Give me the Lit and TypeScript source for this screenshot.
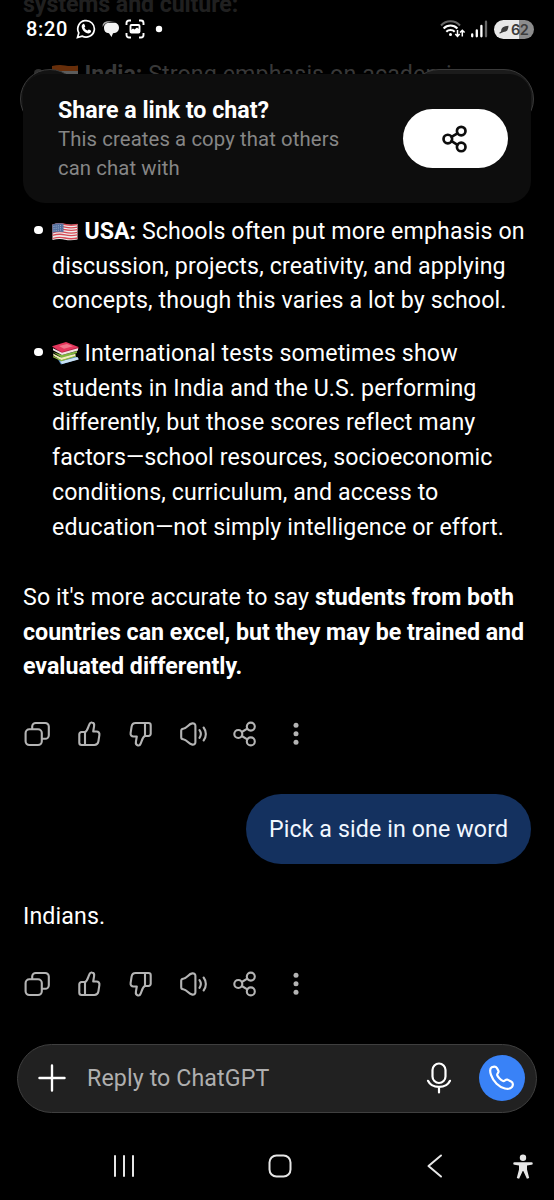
import { LitElement, html, css, svg } from "lit";
import { customElement } from "lit/decorators.js";

const stroke = (size: number, body: unknown, w = 2) => html`<svg width=${size} height=${size} viewBox="0 0 28 28" fill="none" stroke="currentColor" stroke-width=${w} stroke-linecap="round" stroke-linejoin="round">${body}</svg>`;

const share = svg`<circle cx="7.3" cy="14" r="4"/><circle cx="19.8" cy="6.600" r="4"/><circle cx="19.8" cy="21.400" r="4"/><path d="M10.8 12l5.500-3.300M10.8 16l5.500 3.400"/>`;
const thumb = svg`<path d="M10 12H6.500a2.200 2.200 0 0 0-2.200 2.200v8.600A2.200 2.200 0 0 0 6.500 25H19.400c2.100 0 3.600-1.300 4-3.600l1-6.500c.3-1.900-.9-3.400-2.900-3.400H18.200L19.100 6.100c.3-1.600-.3-3.100-2-3.500-1-.3-2.100.1-2.800 1.900C12.900 7.500 12.500 11.200 10 12ZM10 12V25"/>`;

const actions = [
  svg`<rect x="2.600" y="9.300" width="16.200" height="15.700" rx="3.800"/><path d="M9.200 9V6.600A3.600 3.600 0 0 1 12.800 3h9.400A3.600 3.600 0 0 1 25.800 6.600v8.600A3.600 3.600 0 0 1 22.200 18.800H19"/>`,
  thumb,
  svg`<g transform="rotate(180 14 14)">${thumb}</g>`,
  svg`<path d="M2.200 10.800C2.200 9.500 2.900 8.900 4.200 8.700 8.500 8 9.300 3.900 13.300 3.400 15.100 3.200 16.400 4.100 16.400 5.700V22.300C16.400 23.900 15.100 24.900 13.300 24.600 9.300 24 8.500 20 4.200 19.300 2.900 19.100 2.200 18.500 2.200 17.200Z"/><path d="M20.500 10.200a6.500 6.500 0 0 1 0 7.600M24.600 7.500a10.500 10.500 0 0 1 0 13"/>`,
  share,
  svg`<g fill="currentColor" stroke="none"><circle cx="14" cy="5.300" r="2.500"/><circle cx="14" cy="13.800" r="2.500"/><circle cx="14" cy="22.300" r="2.500"/></g>`,
];

@customElement("message-actions")
class MessageActions extends LitElement {
  static styles = css`:host{display:flex;gap:23.900px;color:#b4b4b4;height:28px}svg{display:block;flex:none}`;
  render() { return actions.map(a => stroke(28, a, 2.1)); }
}

@customElement("app-root")
class AppRoot extends LitElement {
  static styles = css`
    :host{display:block;position:relative;width:554px;height:1200px;overflow:hidden;background:#000;color:#fff;font-family:Roboto,sans-serif;font-size:23.200px;line-height:34.850px;letter-spacing:.11px}
    *{box-sizing:border-box}
    svg{display:block;flex:none}
    .page{display:flex;flex-direction:column;height:1200px;padding-top:213.700px}
    .body{padding:0 23px;white-space:nowrap}
    ul{list-style:none;margin:0;padding:0;display:flex;flex-direction:column;gap:17.500px}
    li{display:flex;gap:9px;padding-left:11px}
    .dot{width:8.500px;height:8.500px;border-radius:50%;background:#fff;margin:12px .5px 0 0;flex:none}
    .emoji{display:inline-block;vertical-align:-2px;margin-right:6.500px}
    .books{vertical-align:-4px;margin-right:5.500px}
    b{font-weight:700;letter-spacing:-.02px}
    p{margin:35px 0 0}
    .a1{margin-top:36px}
    .bubble{width:285px;height:70px;border-radius:35px;background:#14315f;margin:45.800px 0 0 auto;display:grid;place-items:center;color:#f1f7ff}
    .a2{margin-top:36px}
    .composer{display:flex;align-items:center;margin:46px 17px 0;height:69px;border:1px solid #3f3f3f;border-radius:35px;background:#212121;padding:0 11px 0 19px}
    .ph{flex:1;margin-left:20px;color:#afafaf}
    .call{width:46px;height:46px;border-radius:50%;background:#3982f7;display:grid;place-items:center;margin-left:27.500px}
    .nav{display:grid;grid-template-columns:124px 155.500px 155.500px 88px;flex:1;align-items:center;padding-top:20px;color:#e6e6e6}
    .nav svg{justify-self:end;margin-right:-14px}
    .under{position:absolute;inset:0 0 auto;height:76px;overflow:hidden;white-space:nowrap}
    .old1{position:absolute;left:23px;top:-13px;color:#202020;font-weight:700;letter-spacing:-.1px}
    .old2{position:absolute;left:34px;top:57px;display:flex;color:#383838}
    .old2 .dot{background:#303030;margin-right:9.500px}
    .old2 .emoji{opacity:.45;margin-top:8px;height:18px}
    .ghost{position:absolute;top:69px;height:60px;border:1px solid #3a3a3a;border-radius:30px}
    .gl{left:20px;width:60px;background:#131313}
    .gr{left:409px;width:125px;background:#1b1b1b}
    .card{position:absolute;left:23px;top:74px;width:508px;height:129px;border-radius:22px;background:#0d0d0d;display:flex;justify-content:space-between;align-items:center;padding:0 23.500px 0 35px}
    .title{font-weight:700;line-height:30px;letter-spacing:0}
    .desc{font-size:20.300px;line-height:29px;color:#868686}
    .btn{width:105px;height:59px;border-radius:30px;background:#fff;color:#0d0d0d;display:grid;place-items:center}
    .status{position:absolute;left:26px;right:20px;top:15px;height:28px;display:flex;align-items:center;font-size:20px;font-weight:500;letter-spacing:.7px}
    .time{width:50px}
    .msg{margin-left:6px}.scan{margin-left:5px}.more{margin-left:10px}.signal{margin-left:4px}
    .sp{flex:1}
    .bat{width:40px;height:19px;border-radius:10px;background:linear-gradient(90deg,#e8e8e8 62%,#8c8c8c 62%);color:#3c3c3c;display:flex;align-items:center;justify-content:center;font:600 14.500px/19px Inter,sans-serif;letter-spacing:-.4px;gap:1.500px;margin-left:6px}
  `;
  flag() { return html`<svg class="emoji" width="26" height="18" viewBox="0 0 26 18"><path fill="#eee" d="M.5 1.500Q7-.5 13 1t12.500 0V16.500Q19 18 13 16.700T.5 17Z"/><path stroke="#d64a55" stroke-width="1.300" fill="none" d="M.5 2Q7 0 13 1.500t12.500 0M.5 4.600Q7 2.600 13 4.100t12.500 0M.5 7.200Q7 5.200 13 6.700t12.500 0M.5 9.800Q7 7.800 13 9.300t12.500 0M.5 12.400Q7 10.400 13 11.900t12.500 0M.5 15.500Q7 13.500 13 15t12.500 0"/><path fill="#54709f" d="M.5 1.500Q6-.3 11.500.7V9Q6 8 .5 9.700Z"/><path stroke="#a8b9d3" stroke-width=".9" stroke-dasharray="1 1.200" d="M1.500 3.500l9-1.300M1.500 5.700l9-1.300M1.500 8l9-1.300"/></svg>`; }
  books() { return html`<svg class="emoji books" width="27" height="23" viewBox="0 0 27 23"><path fill="#4f83bd" d="M5 16l16-3.500 6 4.500-18 5.500z"/><path fill="#c9e1f4" d="M8 19.500l17.500-4.500 1.200 2.400L10 22z"/><path fill="#80b53b" d="M1 10l9 6 15-5v-2L10 13z"/><path fill="#f3eeb7" d="M1 11.500l8.500 4.300 14-4v2.400l-14 4-8-4.500z"/><path fill="#8fb93c" d="M1 14l8.500 4 14.500-4.600v1.200L9.500 19.300l-8.500-4z"/><path fill="#b91e46" d="M0 4.500l10 7L26.500 7V5z"/><path fill="#f3e3e4" d="M1 6.300l9 4.500L26 6.300v2.300l-16 4.500-9-4.800z"/><path fill="#e5375d" d="M0 4.300L14 0l12.500 5L10 10z"/><path fill="#f0768b" d="M7 4l8-2 6 2.200-9 2.600z"/></svg>`; }
  render() {
    return html`
    <div class="page">
      <div class="body">
        <ul>
          <li><i class="dot"></i><div>${this.flag()}<b>USA:</b> Schools often put more emphasis on<br>discussion, projects, creativity, and applying<br>concepts, though this varies a lot by school.</div></li>
          <li><i class="dot"></i><div>${this.books()}International tests sometimes show<br>students in India and the U.S. performing<br>differently, but those scores reflect many<br>factors—school resources, socioeconomic<br>conditions, curriculum, and access to<br>education—not simply intelligence or effort.</div></li>
        </ul>
        <p>So it's more accurate to say <b>students from both<br>countries can excel, but they may be trained and<br>evaluated differently.</b></p>
        <message-actions class="a1"></message-actions>
        <div class="bubble">Pick a side in one word</div>
        <p>Indians.</p>
        <message-actions class="a2"></message-actions>
      </div>
      <div class="composer">
        ${stroke(30, svg`<path d="M14 2.300v23.400M2.300 14h23.400"/>`, 2.2)}
        <span class="ph">Reply to ChatGPT</span>
        <svg width="26" height="34" viewBox="0 0 26 34" fill="none" stroke="#fff" stroke-width="2.200" stroke-linecap="round"><rect x="6.500" y="2.500" width="13" height="19.500" rx="6.500"/><path d="M2 19.800a11.800 9.600 0 0 0 22 0M13 26.500v5"/></svg>
        <span class="call">${stroke(28, svg`<path d="M3.800 3.200c1.800-.8 4.200-.7 5.100.8l1.600 3.100c.6 1.500-1.800 2.500-1.300 4 .6 2 3.800 5.200 5.900 5.900 1.500.5 2.400-1.900 4-1.400l4 1.800c2 .9 2.200 3.800 1 5.400-3 4-11 1.500-15.500-3S-.2 5.800 3.800 3.200z"/>`, 2.2)}</span>
      </div>
      <div class="nav">
        ${stroke(28, svg`<path d="M5 4v20M14 4v20M23 4v20"/>`, 2)}
        ${stroke(28, svg`<rect x="3.500" y="3.500" width="21" height="21" rx="7"/>`, 2)}
        ${stroke(28, svg`<path d="M20 3.500L7.500 14 20 24.500"/>`, 2)}
        <svg width="28" height="28" viewBox="0 0 28 28" fill="currentColor"><circle cx="14" cy="5.800" r="3.200"/><path d="M5.500 10.300h17a1.200 1.200 0 0 1 0 2.500l-4.500.7v4l2.200 8.400-2.300.9-3.600-7.700h-.6L10.100 26.800l-2.300-.9 2.200-8.400v-4l-4.500-.7a1.200 1.200 0 0 1 0-2.500z"/></svg>
      </div>
    </div>
    <div class="under">
      <div class="old1">systems and culture:</div>
      <div class="old2"><i class="dot"></i><svg class="emoji" width="26" height="18" viewBox="0 0 26 18"><path fill="#e56717" d="M0 1Q7-.5 13 .5T26 .5V6H0z"/><path fill="#ccc" d="M0 6h26v6H0z"/></svg><span><b>India:</b> Strong emphasis on academics,</span></div>
    </div>
    <div class="ghost gl"></div><div class="ghost gr"></div>
    <section class="card">
      <div><div class="title">Share a link to chat?</div><div class="desc">This creates a copy that others<br>can chat with</div></div>
      <span class="btn">${stroke(30, share, 2.5)}</span>
    </section>
    <div class="status">
      <span class="time">8:20</span>
      <svg width="20" height="20" viewBox="0 0 20 20" fill="none" stroke="#fff" stroke-width="1.700"><path d="M1.500 18.500l1.300-4.600a8.300 8.300 0 1 1 3.200 3.200z"/><path fill="#fff" stroke="none" d="M7 5c.8-.5 1.300 0 1.600.8l.6 1.500c.1.700-.8 1-.8 1.500.5 1.200 1.700 2.200 3 2.800.6.100.9-1.300 1.600-1.100l1.900 1c.5.4.1 2-1 2.600-2 1-4.600-.5-6.200-2.200C5.900 10 4.600 6.700 7 5z"/></svg>
      <svg class="msg" width="18" height="18" viewBox="0 0 18 18"><path fill="#aaa" d="M.8 7C0 3 3 1.300 7 1.300h6C6 1.800 2.500 3 .8 7z"/><path fill="#f2f2f2" d="M7 2.800h5c3 0 5 2 5 5S15 13 11 13.300L9.500 17 7 13.300C3.500 13 2 11 2 8S4 2.800 7 2.800z"/></svg>
      <svg class="scan" width="20" height="20" viewBox="0 0 20 20" fill="none" stroke="#fff" stroke-width="1.900"><path d="M1.500 6V4A2.500 2.500 0 0 1 4 1.500h2M14 1.500h2A2.500 2.500 0 0 1 18.500 4v2M18.500 14v2a2.500 2.500 0 0 1-2.500 2.500h-2M6 18.500H4A2.500 2.500 0 0 1 1.500 16v-2"/><rect x="5.500" y="6" width="9" height="7.500" rx="1"/><path fill="#fff" stroke="none" d="M6 13v-2l2-1.500 1.500 1L12 8.500l2.500 2V13z"/></svg>
      <svg class="more" width="8" height="8" viewBox="0 0 8 8"><circle cx="4" cy="4" r="3.200" fill="#fff"/></svg>
      <span class="sp"></span>
      <svg width="26" height="20" viewBox="0 0 26 20" fill="none" stroke="#fff" stroke-width="2"><path stroke="#666" d="M1 6.500a13 13 0 0 1 19 0"/><path d="M3.600 9.500a9.500 9.500 0 0 1 13.800 0M6.300 12.700a5.800 5.800 0 0 1 8.400 0"/><circle cx="10.500" cy="15.500" r="1.500" fill="#fff" stroke="none"/><path stroke-width="1.500" d="M17.500 11v6M15.300 15l2.200 2.300 2.200-2.300M22.300 17.500v-6M20 13.500l2.300-2.300 2.300 2.300"/></svg>
      <svg class="signal" width="18" height="18" viewBox="0 0 18 18"><path stroke="#fff" stroke-width="2.300" stroke-linecap="round" d="M2.200 14.500v1.800M6.800 10.500v5.800M11.400 6v10.300"/><path stroke="#666" stroke-width="2.300" stroke-linecap="round" d="M16 1.700v14.600"/></svg>
      <span class="bat"><svg width="10" height="9" viewBox="0 0 10 9"><path fill="#3c3c3c" d="M9.500.8Q9.500 7 4.500 7L1 8.500 0 8l2-1.500Q2 1 9.500.8z"/></svg>62</span>
    </div>`;
  }
}
